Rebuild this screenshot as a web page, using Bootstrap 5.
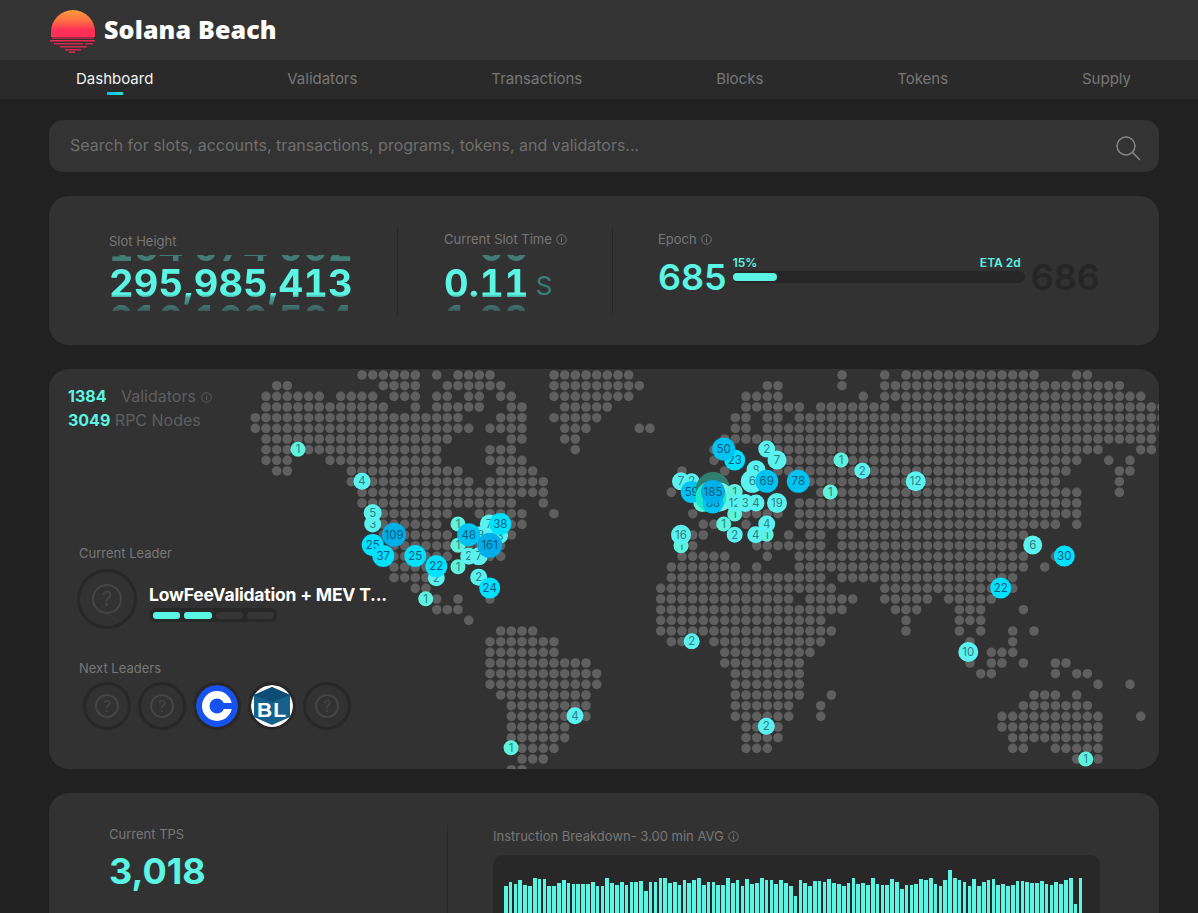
<!DOCTYPE html>
<html lang="en">
<head>
    <meta charset="UTF-8">
    <meta name="viewport" content="width=device-width, initial-scale=1.0">
    <title>Solana Beach</title>
    <link rel="stylesheet" href="https://cdn.jsdelivr.net/npm/bootstrap@5.3.0/dist/css/bootstrap.min.css">
    <style>
        html, body {
            height: 913px;
            overflow: hidden;
        }
        body {
            background-color: #212121;
            font-family: "Inter", "Liberation Sans", sans-serif;
            color: #7a7a7a;
            font-size: 14px;
        }
        .top-bar {
            height: 60px;
            background-color: #333;
            padding-left: 50px;
        }
        .brand {
            font-family: "Open Sans", "Liberation Sans", sans-serif;
            font-size: 25px;
            font-weight: 800;
            letter-spacing: .15px;
            color: #fff;
            margin-left: 8px;
        }
        .main-nav {
            height: 39px;
            background-color: #2a2a2a;
            padding: 0 67px 0 76px;
        }
        .main-nav a {
            position: relative;
            color: #777;
            font-size: 15px;
            text-decoration: none;
        }
        .main-nav a.active {
            color: #f2f2f2;
        }
        .main-nav a.active::after {
            content: '';
            position: absolute;
            left: 31px;
            bottom: -4px;
            width: 16px;
            height: 3px;
            background: linear-gradient(90deg, #12b5e8, #1fe8d0);
        }
        .page {
            padding: 21px 39px 0 49px;
        }
        .search-box {
            height: 52px;
            background-color: #333;
            border-radius: 14px;
            padding: 0 18px 0 21px;
            margin-bottom: 24px;
        }
        .search-box .form-control {
            background: transparent;
            border: 0;
            box-shadow: none;
            padding: 0 0 2px;
            font-size: 16px;
            color: #ccc;
        }
        .search-box .form-control::placeholder {
            color: #6e6e6e;
        }
        .panel {
            background-color: #323232;
            border: 0;
            border-radius: 20px;
            margin-bottom: 24px;
            color: #7a7a7a;
        }
        .stats-panel {
            height: 149px;
            padding-top: 30px;
        }
        .stat {
            height: 89px;
            border-right: 1px solid #282828;
        }
        .stat-slot {
            width: 349px;
            padding: 6px 0 0 60px;
        }
        .stat-time {
            width: 215px;
            padding: 4px 0 0 46px;
        }
        .stat-epoch {
            flex: 1;
            border-right: 0;
            padding: 4px 0 0 45px;
        }
        .stat-label {
            font-size: 13px;
            line-height: 18px;
            color: #777;
        }
        .info {
            width: 11px;
            height: 11px;
            margin-left: 1px;
            vertical-align: -1px;
        }
        .roller {
            height: 56px;
            overflow: hidden;
            font-size: 38px;
            font-weight: 700;
            letter-spacing: .2px;
            line-height: 36px;
            color: #5bf5e3;
            font-variant-numeric: tabular-nums;
            white-space: nowrap;
            -webkit-mask-image: linear-gradient(rgba(0,0,0,.38) 0, rgba(0,0,0,.38) 18%, #000 25%, #000 70%, rgba(0,0,0,.55) 76%, rgba(0,0,0,.22) 100%);
            mask-image: linear-gradient(rgba(0,0,0,.38) 0, rgba(0,0,0,.38) 18%, #000 25%, #000 70%, rgba(0,0,0,.55) 76%, rgba(0,0,0,.22) 100%);
        }
        .roller-inner {
            margin-top: -26px;
        }
        .stat-slot .roller {
            margin-top: 5px;
        }
        .stat-time .roller-wrap {
            margin-top: 7px;
        }
        .unit {
            font-size: 26px;
            font-weight: 400;
            color: #3a7f73;
            margin-left: 7px;
            line-height: 62px;
        }
        .epoch-row {
            margin-top: 7px;
            height: 44px;
        }
        .epoch-num {
            font-size: 36px;
            font-weight: 600;
            line-height: 44px;
            color: #5bf5e3;
        }
        .epoch-num.next {
            color: #262626;
        }
        .epoch-bar {
            width: 292px;
            margin: 1px 6px 0 6px;
            font-size: 12px;
            font-weight: 600;
            line-height: 14px;
            color: #5bf5e3;
        }
        .epoch-track {
            height: 12px;
            background-color: #262626;
            border-radius: 6px;
            margin-top: 1px;
        }
        .epoch-fill {
            height: 8px;
            background-color: #5bf5e3;
            border-radius: 4px;
        }
        .map-panel {
            position: relative;
            height: 400px;
            overflow: hidden;
        }
        .map-svg {
            position: absolute;
            left: 0;
            top: 0;
        }
        .map-side {
            position: relative;
            height: 100%;
            padding: 15px 0 0 19px;
        }
        .net-row {
            font-size: 16px;
            line-height: 24px;
            color: #5e5e5e;
        }
        .net-row b {
            color: #5bf5e3;
            font-weight: 700;
        }
        .net-gap {
            margin-left: 10px;
        }
        .leader-block {
            padding-left: 11px;
        }
        .leader-title {
            margin-top: 112px;
            margin-bottom: 7px;
        }
        .next-title {
            margin-top: 30px;
            margin-bottom: 5px;
        }
        .leader-row {
            margin-left: -2px;
        }
        .ph {
            border-radius: 50%;
            border: 3px solid #282828;
            flex: none;
        }
        .ph span {
            display: block;
            border: 2px solid #454545;
            border-radius: 50%;
            color: #454545;
            text-align: center;
        }
        .ph-lg {
            width: 60px;
            height: 60px;
        }
        .ph-lg span {
            width: 30px;
            height: 30px;
            font-size: 20px;
            line-height: 26px;
        }
        .ph-sm {
            width: 48px;
            height: 48px;
        }
        .ph-sm span {
            width: 24px;
            height: 24px;
            font-size: 16px;
            line-height: 20px;
        }
        .leader-info {
            margin-left: 12px;
            padding-top: 8px;
        }
        .leader-name {
            font-size: 17.5px;
            font-weight: 700;
            line-height: 22px;
            color: #fff;
            white-space: nowrap;
            letter-spacing: -.2px;
        }
        .skips {
            width: 128px;
            height: 14px;
            padding: 0 3px 0 4px;
            background-color: #282828;
            border-radius: 7px;
            margin-top: 2px;
        }
        .skips i {
            flex: 1;
            height: 7px;
            border-radius: 3px;
            background-color: #353535;
        }
        .skips i.on {
            background-color: #5bf5e3;
        }
        .next-list {
            gap: 7px;
            margin-left: 4px;
        }
        .tps-panel {
            height: 320px;
            padding-top: 32px;
        }
        .tps-left {
            width: 399px;
            height: 260px;
            padding-left: 60px;
            border-right: 1px solid #282828;
        }
        .tps-num {
            font-size: 36px;
            font-weight: 700;
            line-height: 46px;
            color: #5bf5e3;
            margin-top: 5px;
        }
        .tps-right {
            width: 652px;
            padding: 2px 0 0 45px;
        }
        .bars-box {
            height: 220px;
            background-color: #282828;
            border-radius: 10px;
            margin-top: 10px;
            padding: 19px 17px 0 11px;
        }
        .bars {
            height: 180px;
            gap: 1.2px;
        }
        .bars i {
            flex: 1;
            background-color: #5bf5e3;
        }
    </style>
</head>
<body>

    <!-- Logo bar -->
    <div class="top-bar d-flex align-items-center">
        <svg width="46" height="46" viewBox="0 0 46 46" class="mt-1">
            <defs>
                <linearGradient id="sun" x1="0" y1="0" x2="0" y2="1">
                    <stop offset="0" stop-color="#ff9c3a"/>
                    <stop offset=".45" stop-color="#ff6b45"/>
                    <stop offset=".8" stop-color="#ff2f58"/>
                </linearGradient>
            </defs>
            <path d="M1 23a22 22 0 0 1 44 0v3H1z" fill="url(#sun)"/>
            <rect x="1" y="26" width="44" height="2" fill="#ff2f58"/>
            <rect x="2" y="28" width="42" height="2" fill="#a82a45"/>
            <rect x="0" y="31" width="45" height="1.5" fill="#ef2a52"/>
            <rect x="4" y="34" width="29" height="1.5" fill="#c92a4c"/>
            <rect x="35" y="34" width="8" height="1.5" fill="#c92a4c"/>
            <rect x="10" y="37" width="27" height="1.5" fill="#d92a4e"/>
            <rect x="15" y="40" width="16" height="1.5" fill="#d92a4e"/>
            <rect x="19" y="42.5" width="6" height="1.5" fill="#d92a4e"/>
        </svg>
        <span class="brand">Solana Beach</span>
    </div>

    <!-- Main nav -->
    <nav class="main-nav d-flex align-items-center justify-content-between">
        <a href="#" class="active">Dashboard</a>
        <a href="#">Validators</a>
        <a href="#">Transactions</a>
        <a href="#">Blocks</a>
        <a href="#">Tokens</a>
        <a href="#">Supply</a>
    </nav>

    <svg width="0" height="0" class="position-absolute">
        <symbol id="info" viewBox="0 0 12 12">
            <circle cx="6" cy="6" r="5.2" fill="none" stroke="currentColor" stroke-width="1"/>
            <rect x="5.4" y="5" width="1.2" height="4" fill="currentColor"/>
            <rect x="5.4" y="3" width="1.2" height="1.2" fill="currentColor"/>
        </symbol>
    </svg>

    <div class="page">
        <!-- Search -->
        <div class="search-box d-flex align-items-center">
            <input type="text" class="form-control" placeholder="Search for slots, accounts, transactions, programs, tokens, and validators...">
            <svg width="26" height="26" viewBox="0 0 26 26" fill="none" stroke="#8a8a8a" stroke-width="1.4" class="flex-shrink-0 mt-1">
                <circle cx="11" cy="11" r="9"/>
                <line x1="17.6" y1="17.6" x2="25" y2="25"/>
            </svg>
        </div>

        <!-- Slot stats -->
        <div class="card panel stats-panel flex-row">
            <div class="stat stat-slot">
                <div class="stat-label">Slot Height</div>
                <div class="roller">
                    <div class="roller-inner">
                        <div>164<span class="invisible">,</span>074<span class="invisible">,</span>002</div>
                        <div>295,985,413</div>
                        <div>010<span class="invisible">,</span>100<span class="invisible">,</span>504</div>
                    </div>
                </div>
            </div>
            <div class="stat stat-time">
                <div class="stat-label">Current Slot Time <svg class="info"><use href="#info"/></svg></div>
                <div class="roller-wrap d-flex align-items-start">
                    <div class="roller">
                        <div class="roller-inner">
                            <div><span class="invisible">0.</span>00</div>
                            <div>0.11</div>
                            <div>1<span class="invisible">.</span>22</div>
                        </div>
                    </div>
                    <span class="unit">S</span>
                </div>
            </div>
            <div class="stat stat-epoch">
                <div class="stat-label">Epoch <svg class="info"><use href="#info"/></svg></div>
                <div class="epoch-row d-flex align-items-start">
                    <span class="epoch-num">685</span>
                    <div class="epoch-bar">
                        <div class="d-flex justify-content-between pe-1"><span>15%</span><span>ETA 2d</span></div>
                        <div class="epoch-track d-flex align-items-center">
                            <div class="epoch-fill" style="width: 15%"></div>
                        </div>
                    </div>
                    <span class="epoch-num next">686</span>
                </div>
            </div>
        </div>

        <!-- Validator map -->
        <div class="card panel map-panel">
            <svg id="map" class="map-svg" width="1110" height="400" viewBox="49 369 1110 400"></svg>
            <div class="map-side">
                <div class="net-row"><b>1384</b> <span class="net-gap">Validators</span> <svg class="info"><use href="#info"/></svg></div>
                <div class="net-row"><b>3049</b> RPC Nodes</div>

                <div class="leader-block">
                    <div class="stat-label leader-title">Current Leader</div>
                    <div class="leader-row d-flex align-items-center">
                        <div class="ph ph-lg d-flex align-items-center justify-content-center"><span>?</span></div>
                        <div class="leader-info">
                            <div class="leader-name">LowFeeValidation + MEV T...</div>
                            <div class="skips d-flex align-items-center gap-1">
                                <i class="on"></i><i class="on"></i><i></i><i></i>
                            </div>
                        </div>
                    </div>

                    <div class="stat-label next-title">Next Leaders</div>
                    <div class="next-list d-flex">
                        <div class="ph ph-sm d-flex align-items-center justify-content-center"><span>?</span></div>
                        <div class="ph ph-sm d-flex align-items-center justify-content-center"><span>?</span></div>
                        <div class="ph ph-sm overflow-hidden">
                            <svg width="42" height="42" viewBox="-21 -21 42 42" class="d-block">
                                <circle r="21" fill="#1652f0"/>
                                <circle r="15" fill="#fff"/>
                                <circle r="7.5" fill="#1652f0"/>
                                <rect x="0" y="-3" width="18" height="6" fill="#1652f0"/>
                            </svg>
                        </div>
                        <div class="ph ph-sm overflow-hidden">
                            <svg width="42" height="42" viewBox="-21 -21 42 42" class="d-block">
                                <circle r="21" fill="#fff"/>
                                <polygon points="0,-19 18,-11 18,11 0,19 -18,11 -18,-11" fill="#15618c"/>
                                <polygon points="0,-19 18,-11 0,-4 -18,-11" fill="#0d4d75"/>
                                <text x="0" y="11" text-anchor="middle" font-family="Liberation Sans, sans-serif" font-weight="700" font-size="21" letter-spacing="1" fill="#fff">BL</text>
                            </svg>
                        </div>
                        <div class="ph ph-sm d-flex align-items-center justify-content-center"><span>?</span></div>
                    </div>
                </div>
            </div>
        </div>

        <!-- TPS -->
        <div class="card panel tps-panel flex-row">
            <div class="tps-left">
                <div class="stat-label">Current TPS</div>
                <div class="tps-num">3,018</div>
            </div>
            <div class="tps-right">
                <div class="stat-label">Instruction Breakdown- 3.00 min AVG <svg class="info"><use href="#info"/></svg></div>
                <div class="bars-box">
                    <div id="bars" class="bars d-flex align-items-end"></div>
                </div>
            </div>
        </div>
    </div>

    <script src="https://cdn.jsdelivr.net/npm/bootstrap@5.3.0/dist/js/bootstrap.bundle.min.js"></script>
    <script>
        // map rows: "from-to" column ranges, one string per dot row
        const rows = [
            "10-15 17 19-22 28-35 55 59 61-73 77-78",
            "2-3 12-15 18-23 28-36 48-49 55 59-81",
            "1-6 8-11 13-15 17-18 20-21 23-24 28-35 46-49 57 59-83",
            "1-12 15 17-21 24-25 29-33 46-51 53-59 61-85",
            "0-19 23-25 28-32 45-46 48-49 51-85",
            "0-20 22-25 29-31 36-37 45-46 48-85",
            "1-18 24-25 29-30 44-84",
            "1-17 22-24 30 43 48-79 83-84",
            "1-3 7-17 22-25 43 50-77 80 82",
            "2-3 9-19 23-26 40 44 49-76 81-82",
            "9-20 22-27 52-75 81",
            "10-27 39 53-77 81",
            "10-24 27 51-77",
            "12-18 21-25 28 41 46-49 51-77",
            "11-17 19 22-25 42-43 46 51-75 77",
            "12-18 20-24 41-42 50 52-53 55-72",
            "13-18 19-23 41 47-53 55-71",
            "13-18 20-23 40-44 48 51-72 75",
            "13-16 39-45 47 51-72 74",
            "13-16 39-53 55-71",
            "15-16 38-54 59-71",
            "16-17 19 22 38-50 52-56 59-63 65-69",
            "17-19 38-55 60-62 66-68 72",
            "20 38-53 61 66-68",
            "23-26 38-54 61 66 68 71 73",
            "22-28 39-41 43-53 67 71",
            "22-28 44-52 67 69-71",
            "22-31 44-51 67 69-70 72 75-76",
            "22-32 45-51 68-69 75 77-78",
            "22-32 45-51 79 82",
            "23-31 45-51 54 73-75 77",
            "24-31 45-50 53 72-78",
            "24-31 45-50 53 70-79 83",
            "24-29 46-49 70-79",
            "24-29 46-49 71-79",
            "24-28 46-48 71-72 75-79",
            "25-27 77-79",
            "24-25"
        ];

        // x, y, label, radius, fill (label 0 = plain disc)
        const pins = [
            [298,449.3,1,7.5],[362,481.3,4,8.5],[372.7,524,3,8.5],[372.7,513,5,9],
            [394,534.7,109,12],[372.7,545,25,11],[383.3,556,37,11],[415.3,556,25,11],
            [436.3,577.7,2,8.5],[436.3,566.3,22,11],[425.7,598.7,1,7.5],[458,524,1,7.5],
            [458,545.3,1,7.5],[458,566.7,1,7.5],[489.3,524,7,9.5],[500,535.7,3,8],
            [500.3,524,38,11],[480.7,534.7,3,8.5],[468.7,556.3,2,8.5],[478.7,556.3,7,9],
            [468.7,534.7,48,11.5],[489.7,545.3,161,12.5],[478.7,577.3,2,8.5],[489.7,588,24,10.5],
            [575,715.7,4,8.5],[511,747.7,1,7.5],
            [681,481.3,7,9],[691.7,481.3,2,8],[702.3,503,1,9],[691.7,492,59,11],
            // pulse around the biggest cluster
            [713,489,0,17,"#2f7f6e"],[719,497,0,14.5,"#7cefd8"],[711,497,0,15.5,"#1be8c8"],
            [713,503,88,10.5],[713,492,185,12],
            [734.7,492,1,8],[734.7,514,1,7.5],[734.7,503,12,9],[745.3,503,3,9],[756,503,4,8.5],
            [734.7,460,23,10.5],[723.7,449,50,11.5],[766.7,449,2,8.5],[777,460,7,9.5],
            [756,469.7,8,9.5],[752.3,481.3,6,11.5],[766.7,481.3,69,11.5],[798.3,481.3,78,11.5],
            [777,503,19,10],[723.7,524,1,7.5],[734.7,534.7,2,8],[766.7,534.7,1,7],[766.7,524,4,8.5],
            [755.7,534.7,4,8.5],[681,545.7,1,7.5],[681,534.7,16,10],[841,460,1,7.5],[862.3,470.7,2,8],
            [830.3,492,1,7.5],[915.7,481.3,12,10],[1032.7,545,6,9.5],[1064.3,556,30,10.5],
            [1000.7,588,22,10.5],[968.3,652,10,10],[691.7,641.3,2,8],[766.3,726.3,2,8.5],[1085.7,759,1,7.5]
        ];

        function pinColor(n) {
            if (n === 1) return "#5ef3dc";
            if (n < 20) return "#5af2f0";
            if (n < 45) return "#00e0ff";
            if (n < 100) return "#00c3f2";
            return "#00aeea";
        }

        function circle(cx, cy, r, fill) {
            return `<circle cx="${cx}" cy="${cy}" r="${r}" fill="${fill}"/>`;
        }

        function pin(p) {
            if (!p[2]) return circle(p[0], p[1], p[3], p[4]);
            const ink = p[2] < 20 ? "#2f7f80" : "#0f5a78";
            return circle(p[0], p[1], p[3], pinColor(p[2])) +
                `<text x="${p[0]}" y="${p[1] + 4}" text-anchor="middle" font-size="11.5" fill="${ink}">${p[2]}</text>`;
        }

        let svg = "";
        rows.forEach((row, r) => {
            row.split(" ").forEach(range => {
                const ends = range.split("-").map(Number);
                const last = ends.length > 1 ? ends[1] : ends[0];
                for (let c = ends[0]; c <= last; c++) {
                    svg += circle((255.33 + 10.667 * c).toFixed(1), (375 + 10.667 * r).toFixed(1), 4.8, "#5f5f5f");
                }
            });
        });
        pins.forEach(p => { svg += pin(p); });
        document.getElementById("map").innerHTML = svg;

        // bar heights: steady noise with the few spikes and dips of the chart
        const special = { 18: 172, 29: 163, 60: 158, 92: 184, 96: 168, 106: 173, 63: 168, 82: 165, 118: 150, 124: 178 };
        let seed = 7, bars = "";
        for (let i = 0; i < 120; i++) {
            seed = (seed * 137 + 59) % 1009;
            const h = special[i] || 168 + seed % 9;
            bars += `<i style="height:${h}px"></i>`;
        }
        document.getElementById("bars").innerHTML = bars;
    </script>

</body>
</html>
